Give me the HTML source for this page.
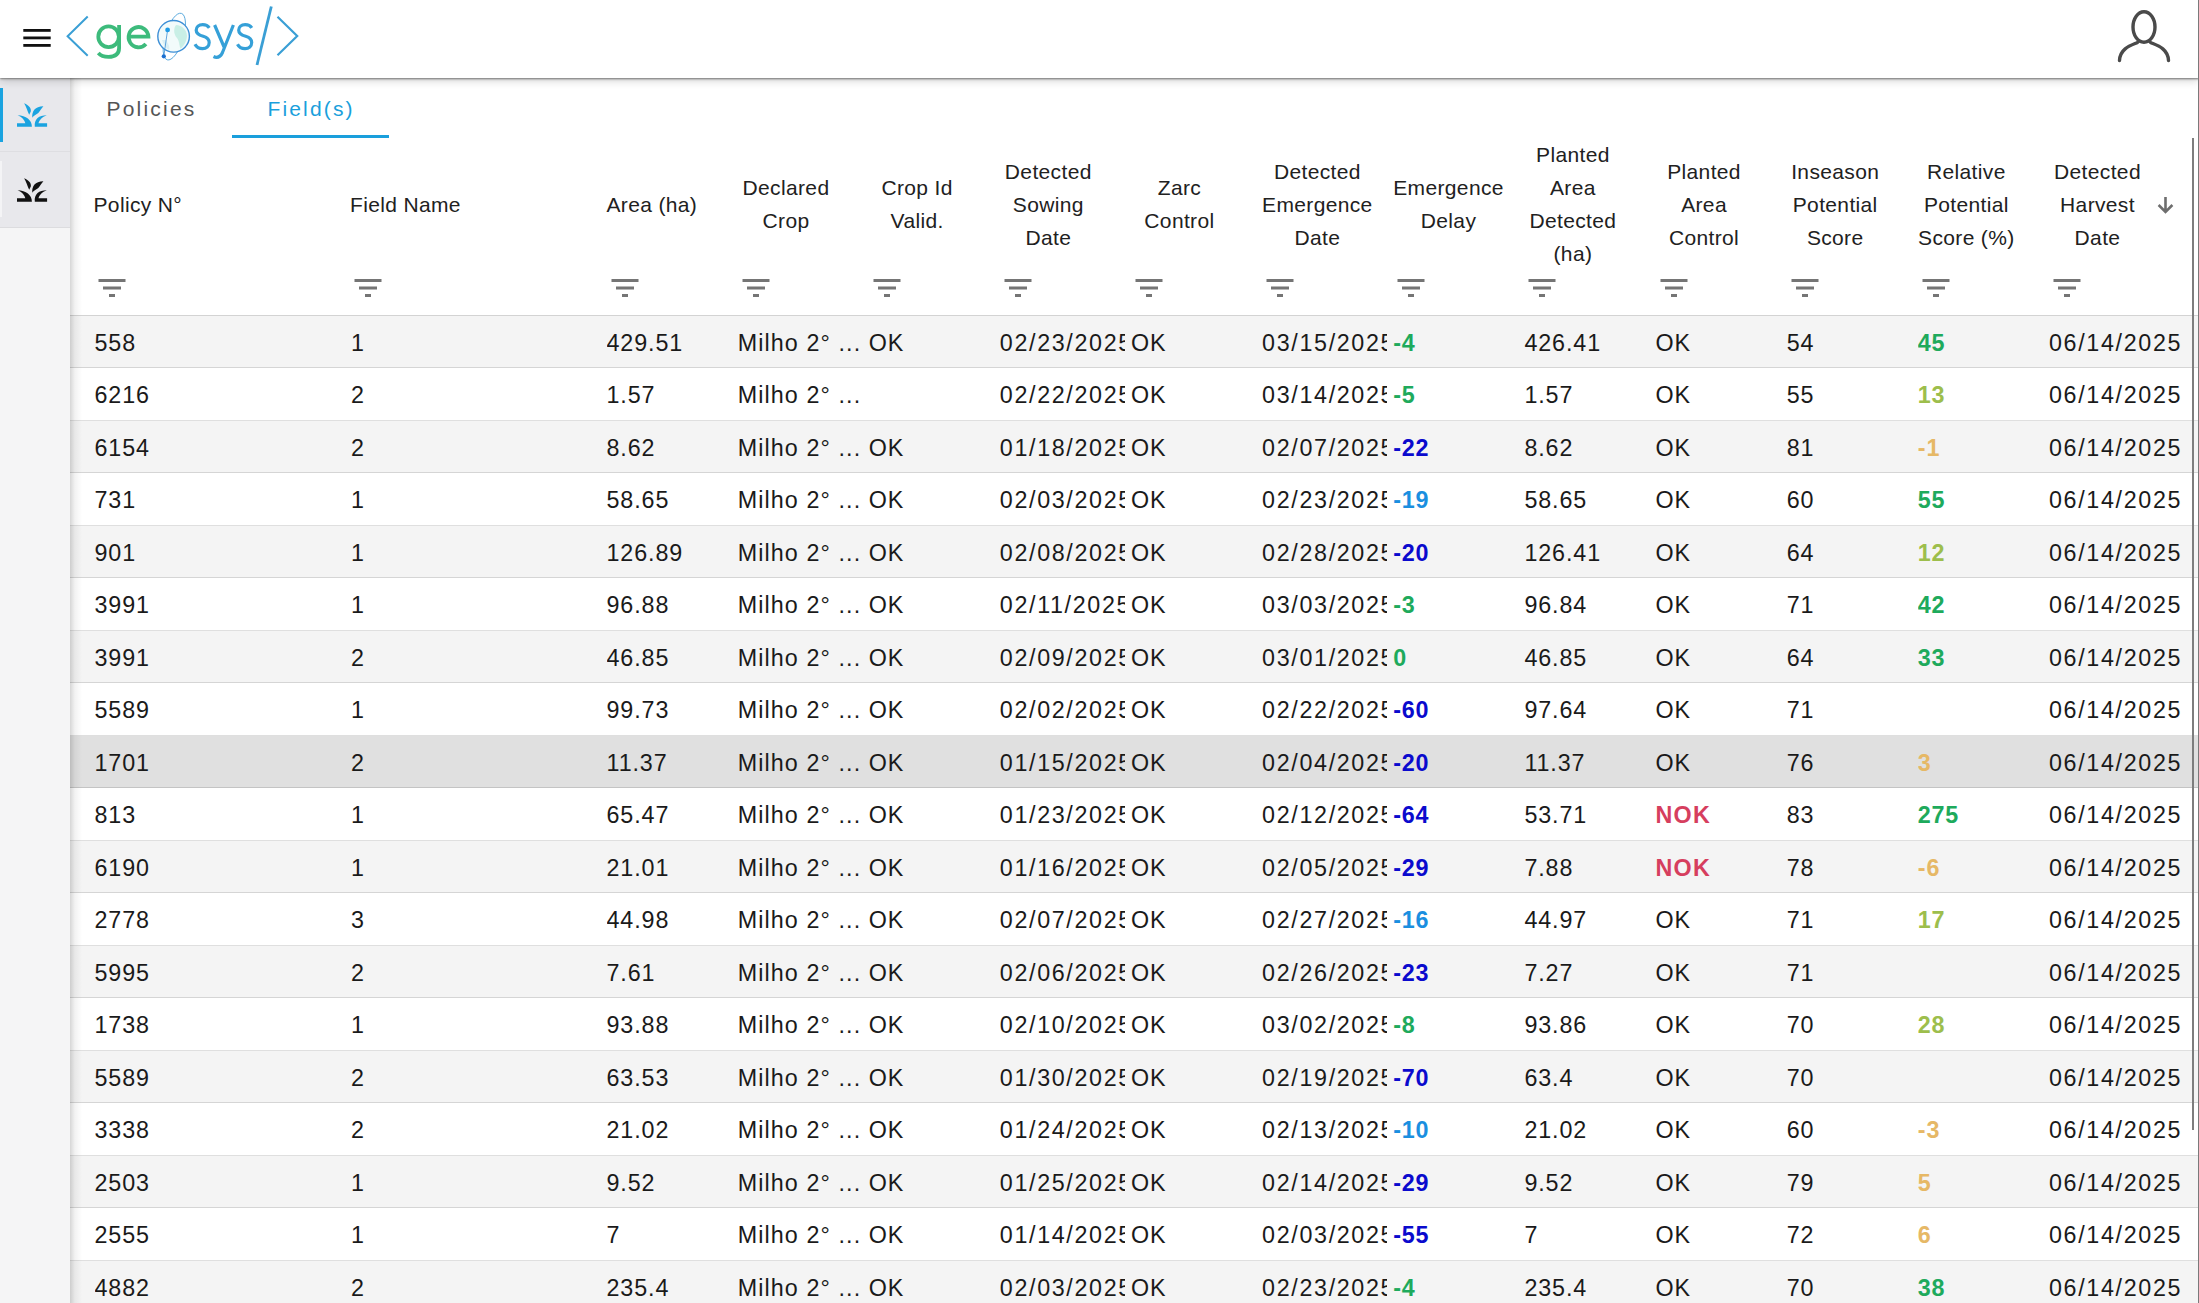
<!DOCTYPE html><html><head><meta charset="utf-8"><style>
*{box-sizing:border-box;margin:0;padding:0}
html,body{width:2199px;height:1303px;overflow:hidden;background:#fff;font-family:"Liberation Sans", sans-serif;}
#top{position:absolute;left:0;top:0;width:2199px;height:78px;background:#fff;z-index:5;box-shadow:0 1px 2px rgba(0,0,0,.5),0 2px 9px rgba(0,0,0,.2)}
#side{position:absolute;left:0;top:78px;width:70px;height:1225px;background:#f5f5f6;z-index:3;}
#main{position:absolute;left:70px;top:78px;width:2129px;height:1225px;background:#fff;overflow:hidden}
#mainshadow{position:absolute;left:70px;top:78px;width:12px;height:1225px;background:linear-gradient(to right,rgba(0,0,0,.16),rgba(0,0,0,.05) 40%,rgba(0,0,0,0));z-index:4}
.hl{position:absolute;font-size:21px;line-height:33px;color:#212121;white-space:nowrap;letter-spacing:0.35px}
.hb{position:absolute;font-size:21px;line-height:33px;color:#212121;white-space:nowrap;text-align:center;min-width:97px;width:max-content;letter-spacing:0.35px}
.rowbg{position:absolute;left:70px;width:2128px;border-bottom:1px solid rgba(0,0,0,.125)}
.row{position:absolute;left:70px;width:2128px;height:52px}
.c{position:absolute;top:0;height:52px;line-height:56px;font-size:23.3px;color:#1a1a1a;white-space:nowrap;overflow:hidden;letter-spacing:0.9px}
.b{font-weight:bold;letter-spacing:0.8px}
.d{letter-spacing:1.65px}
.nok{letter-spacing:1.2px}
.m{letter-spacing:1.1px}
.flt{position:absolute;top:270px;width:36px;height:36px}
</style></head><body>
<div id="top">
<svg style="position:absolute;left:0;top:0" width="320" height="78" viewBox="0 0 320 78"><rect x="23.3" y="29" width="27.4" height="2.8" fill="#111"/><rect x="23.3" y="36.5" width="27.4" height="2.8" fill="#111"/><rect x="23.3" y="44" width="27.4" height="2.8" fill="#111"/><path d="M87.7 16.5 L67.6 36.2 L87.7 55.8" fill="none" stroke="#3a9fd5" stroke-width="2"/><path d="M277.5 16.8 L297.2 36 L277.5 55.2" fill="none" stroke="#3a9fd5" stroke-width="2.2"/><path d="M271.3 6.5 L257 65" fill="none" stroke="#3a9fd5" stroke-width="2.8"/><g fill="none" stroke="#3dbb7c" stroke-width="3.8"><circle cx="108.6" cy="36.75" r="10.3"/><path d="M119.1 25 V48 C119 54.5 114.5 56.9 108.5 56.9 C104 56.9 100.5 55.5 98.3 53"/><path d="M128.8 36.6 H148.4 A9.9 10.1 0 1 0 145.9 43.9"/></g><ellipse cx="174.3" cy="36.6" rx="9" ry="24.3" transform="rotate(17 174.3 36.6)" fill="none" stroke="#5aa9dd" stroke-width="0.9"/><circle cx="173.6" cy="36.3" r="15.8" fill="#f2fbfb" stroke="#3d8fd6" stroke-width="1.4"/><path d="M176 25 C182 25.5 187 30 187 36 C186.5 42 183.5 46.5 180.5 48.5 C179 45 179.5 41 177 38 C174 35 173 29 176 25 Z" fill="#a8e6d6" opacity="0.55"/><path d="M166 40 C168 43 170 47 169 50 C166 48 163 44 162 40 Z" fill="#bfe3f0" opacity="0.5"/><path d="M167.6 29.9 L163.8 56.3" stroke="#3d8fd6" stroke-width="0.8"/><circle cx="167.6" cy="29.9" r="2.4" fill="#1f9be6"/><circle cx="163.8" cy="56.3" r="2.1" fill="#1a6fd0"/><g fill="none" stroke="#35a0d8" stroke-width="3.2"><path d="M209.3 27.8 C208 25.8 205.5 24.6 202.7 24.6 C198.8 24.6 196.2 26.9 196.2 30.2 C196.2 33.8 199.5 35.2 203.2 36.3 C207 37.4 209.2 39.3 209.2 42.6 C209.2 46.2 206.3 48.6 202.6 48.6 C199 48.6 196.3 46.8 195 44.2"/><path d="M251.8 27.8 C250.5 25.8 248 24.6 245.2 24.6 C241.3 24.6 238.7 26.9 238.7 30.2 C238.7 33.8 242 35.2 245.7 36.3 C249.5 37.4 251.7 39.3 251.7 42.6 C251.7 46.2 248.8 48.6 245.1 48.6 C241.5 48.6 238.8 46.8 237.5 44.2"/><path d="M214.6 25 L224.3 47.5 M233.4 25 L222.5 52.5 C221 56 219 57.3 216.5 57.3 C215.5 57.3 214.5 57 213.5 56.5"/></g></svg>
<svg style="position:absolute;left:2110px;top:6px" width="70" height="62" viewBox="2110 6 70 62"><ellipse cx="2144" cy="27" rx="11" ry="15.3" fill="none" stroke="#4a4a4a" stroke-width="3.4"/><path d="M2137.5 42.5 C2132 45 2120 48 2119.5 60.5 M2150.5 42.5 C2156 45 2168 48 2168.5 60.5" fill="none" stroke="#4a4a4a" stroke-width="3.4" stroke-linecap="round"/></svg>
</div>
<div id="side"><div style="position:absolute;left:0;top:2px;width:70px;height:72px;background:#e8e8ec;border-bottom:1px solid #dedee2"></div><div style="position:absolute;left:0;top:9.6px;width:2.5px;height:54px;background:#1aa3e0"></div><div style="position:absolute;left:0;top:74px;width:70px;height:76px;background:#e8e8ec;border-bottom:1px solid #dcdcdf"></div><div style="position:absolute;left:0;top:83px;width:2px;height:56px;background:#f4f4f6"></div><svg style="position:absolute;left:17px;top:25px" width="31" height="25" viewBox="0 0 31 25"><path fill="#1aa3e0" d="M0 20.3 H8.3 C7.8 17.5 5 14 0.6 12.3 C9 12.5 14.9 17 14.9 23.8 H0 Z M30.1 20.3 H21.5 C22.2 17.5 25 14 29.8 12.3 C22 12.3 17 16 17.8 23.8 H30.1 Z M7.1 0.2 C12 2 14.5 5.5 13.8 8.5 L12.2 11.7 C10.5 8.5 9 3 7.1 0.2 Z M15.3 14.7 C14.8 8 18 3.5 26.4 3.2 C25 4.5 22.5 9 20.6 10.6 C18.5 12 16.3 13 15.3 14.7 Z"/></svg><svg style="position:absolute;left:17px;top:100px" width="31" height="25" viewBox="0 0 31 25"><path fill="#111" d="M0 20.3 H8.3 C7.8 17.5 5 14 0.6 12.3 C9 12.5 14.9 17 14.9 23.8 H0 Z M30.1 20.3 H21.5 C22.2 17.5 25 14 29.8 12.3 C22 12.3 17 16 17.8 23.8 H30.1 Z M7.1 0.2 C12 2 14.5 5.5 13.8 8.5 L12.2 11.7 C10.5 8.5 9 3 7.1 0.2 Z M15.3 14.7 C14.8 8 18 3.5 26.4 3.2 C25 4.5 22.5 9 20.6 10.6 C18.5 12 16.3 13 15.3 14.7 Z"/></svg></div>
<div id="mainshadow"></div>
<div id="main"></div>
<div style="position:absolute;left:106.5px;top:93.5px;font-size:21px;line-height:30px;letter-spacing:2.2px;color:#555">Policies</div>
<div style="position:absolute;left:267.5px;top:93.5px;font-size:21px;line-height:30px;letter-spacing:2.15px;color:#1a9fdc">Field(s)</div>
<div style="position:absolute;left:232px;top:135px;width:157px;height:3px;background:#1a9fdc"></div>
<div class="hl" style="left:93.5px;top:187.5px">Policy N°</div>
<div class="flt" style="left:93.5px"><svg width="36" height="36" viewBox="0 0 24 24"><path fill="#757575" d="M10 18h4v-2h-4v2zM3 6v2h18V6H3zm3 7h12v-2H6v2z"/></svg></div>
<div class="hl" style="left:350.0px;top:187.5px">Field Name</div>
<div class="flt" style="left:350.0px"><svg width="36" height="36" viewBox="0 0 24 24"><path fill="#757575" d="M10 18h4v-2h-4v2zM3 6v2h18V6H3zm3 7h12v-2H6v2z"/></svg></div>
<div class="hl" style="left:606.5px;top:187.5px">Area (ha)</div>
<div class="flt" style="left:606.5px"><svg width="36" height="36" viewBox="0 0 24 24"><path fill="#757575" d="M10 18h4v-2h-4v2zM3 6v2h18V6H3zm3 7h12v-2H6v2z"/></svg></div>
<div class="hb" style="left:737.5px;top:171.0px">Declared<br>Crop</div>
<div class="flt" style="left:737.5px"><svg width="36" height="36" viewBox="0 0 24 24"><path fill="#757575" d="M10 18h4v-2h-4v2zM3 6v2h18V6H3zm3 7h12v-2H6v2z"/></svg></div>
<div class="hb" style="left:868.65px;top:171.0px">Crop Id<br>Valid.</div>
<div class="flt" style="left:868.65px"><svg width="36" height="36" viewBox="0 0 24 24"><path fill="#757575" d="M10 18h4v-2h-4v2zM3 6v2h18V6H3zm3 7h12v-2H6v2z"/></svg></div>
<div class="hb" style="left:999.8px;top:154.5px">Detected<br>Sowing<br>Date</div>
<div class="flt" style="left:999.8px"><svg width="36" height="36" viewBox="0 0 24 24"><path fill="#757575" d="M10 18h4v-2h-4v2zM3 6v2h18V6H3zm3 7h12v-2H6v2z"/></svg></div>
<div class="hb" style="left:1130.95px;top:171.0px">Zarc<br>Control</div>
<div class="flt" style="left:1130.95px"><svg width="36" height="36" viewBox="0 0 24 24"><path fill="#757575" d="M10 18h4v-2h-4v2zM3 6v2h18V6H3zm3 7h12v-2H6v2z"/></svg></div>
<div class="hb" style="left:1262.1px;top:154.5px">Detected<br>Emergence<br>Date</div>
<div class="flt" style="left:1262.1px"><svg width="36" height="36" viewBox="0 0 24 24"><path fill="#757575" d="M10 18h4v-2h-4v2zM3 6v2h18V6H3zm3 7h12v-2H6v2z"/></svg></div>
<div class="hb" style="left:1393.25px;top:171.0px">Emergence<br>Delay</div>
<div class="flt" style="left:1393.25px"><svg width="36" height="36" viewBox="0 0 24 24"><path fill="#757575" d="M10 18h4v-2h-4v2zM3 6v2h18V6H3zm3 7h12v-2H6v2z"/></svg></div>
<div class="hb" style="left:1524.4px;top:138.0px">Planted<br>Area<br>Detected<br>(ha)</div>
<div class="flt" style="left:1524.4px"><svg width="36" height="36" viewBox="0 0 24 24"><path fill="#757575" d="M10 18h4v-2h-4v2zM3 6v2h18V6H3zm3 7h12v-2H6v2z"/></svg></div>
<div class="hb" style="left:1655.5500000000002px;top:154.5px">Planted<br>Area<br>Control</div>
<div class="flt" style="left:1655.5500000000002px"><svg width="36" height="36" viewBox="0 0 24 24"><path fill="#757575" d="M10 18h4v-2h-4v2zM3 6v2h18V6H3zm3 7h12v-2H6v2z"/></svg></div>
<div class="hb" style="left:1786.7px;top:154.5px">Inseason<br>Potential<br>Score</div>
<div class="flt" style="left:1786.7px"><svg width="36" height="36" viewBox="0 0 24 24"><path fill="#757575" d="M10 18h4v-2h-4v2zM3 6v2h18V6H3zm3 7h12v-2H6v2z"/></svg></div>
<div class="hb" style="left:1917.8500000000001px;top:154.5px">Relative<br>Potential<br>Score (%)</div>
<div class="flt" style="left:1917.8500000000001px"><svg width="36" height="36" viewBox="0 0 24 24"><path fill="#757575" d="M10 18h4v-2h-4v2zM3 6v2h18V6H3zm3 7h12v-2H6v2z"/></svg></div>
<div class="hb" style="left:2049.0px;top:154.5px">Detected<br>Harvest<br>Date</div>
<div class="flt" style="left:2049.0px"><svg width="36" height="36" viewBox="0 0 24 24"><path fill="#757575" d="M10 18h4v-2h-4v2zM3 6v2h18V6H3zm3 7h12v-2H6v2z"/></svg></div>
<svg style="position:absolute;left:2150px;top:190px" width="30" height="30" viewBox="2150 190 30 30"><path d="M2165.5 197 V211.5 M2158.6 205 L2165.5 211.9 L2172.4 205" fill="none" stroke="#6e6e6e" stroke-width="2.6"/></svg>
<div class="rowbg" style="top:316px;height:52px;background:#f4f4f4"></div>
<div class="row" style="top:315px">
<div class="c" style="left:24.5px;width:250px">558</div>
<div class="c" style="left:281.0px;width:250px">1</div>
<div class="c" style="left:536.5px;width:125px">429.51</div>
<div class="c m" style="left:667.75px;width:124.75px">Milho 2° ...</div>
<div class="c" style="left:798.65px;width:125px">OK</div>
<div class="c d" style="left:929.8px;width:125px">02/23/2025</div>
<div class="c" style="left:1060.95px;width:125px">OK</div>
<div class="c d" style="left:1192.1px;width:125px">03/15/2025</div>
<div class="c b" style="left:1323.25px;width:125px;color:#1eaa5c">-4</div>
<div class="c" style="left:1454.4px;width:125px">426.41</div>
<div class="c" style="left:1585.5500000000002px;width:125px">OK</div>
<div class="c" style="left:1716.7px;width:125px">54</div>
<div class="c b" style="left:1847.8500000000001px;width:125px;color:#1eaa5c">45</div>
<div class="c d" style="left:1979.0px;width:145px">06/14/2025</div>
</div>
<div class="rowbg" style="top:368px;height:53px;background:#ffffff"></div>
<div class="row" style="top:367px">
<div class="c" style="left:24.5px;width:250px">6216</div>
<div class="c" style="left:281.0px;width:250px">2</div>
<div class="c" style="left:536.5px;width:125px">1.57</div>
<div class="c m" style="left:667.75px;width:124.75px">Milho 2° ...</div>
<div class="c d" style="left:929.8px;width:125px">02/22/2025</div>
<div class="c" style="left:1060.95px;width:125px">OK</div>
<div class="c d" style="left:1192.1px;width:125px">03/14/2025</div>
<div class="c b" style="left:1323.25px;width:125px;color:#1eaa5c">-5</div>
<div class="c" style="left:1454.4px;width:125px">1.57</div>
<div class="c" style="left:1585.5500000000002px;width:125px">OK</div>
<div class="c" style="left:1716.7px;width:125px">55</div>
<div class="c b" style="left:1847.8500000000001px;width:125px;color:#9dbe4c">13</div>
<div class="c d" style="left:1979.0px;width:145px">06/14/2025</div>
</div>
<div class="rowbg" style="top:421px;height:52px;background:#f4f4f4"></div>
<div class="row" style="top:420px">
<div class="c" style="left:24.5px;width:250px">6154</div>
<div class="c" style="left:281.0px;width:250px">2</div>
<div class="c" style="left:536.5px;width:125px">8.62</div>
<div class="c m" style="left:667.75px;width:124.75px">Milho 2° ...</div>
<div class="c" style="left:798.65px;width:125px">OK</div>
<div class="c d" style="left:929.8px;width:125px">01/18/2025</div>
<div class="c" style="left:1060.95px;width:125px">OK</div>
<div class="c d" style="left:1192.1px;width:125px">02/07/2025</div>
<div class="c b" style="left:1323.25px;width:125px;color:#0a0acd">-22</div>
<div class="c" style="left:1454.4px;width:125px">8.62</div>
<div class="c" style="left:1585.5500000000002px;width:125px">OK</div>
<div class="c" style="left:1716.7px;width:125px">81</div>
<div class="c b" style="left:1847.8500000000001px;width:125px;color:#e6b866">-1</div>
<div class="c d" style="left:1979.0px;width:145px">06/14/2025</div>
</div>
<div class="rowbg" style="top:473px;height:53px;background:#ffffff"></div>
<div class="row" style="top:472px">
<div class="c" style="left:24.5px;width:250px">731</div>
<div class="c" style="left:281.0px;width:250px">1</div>
<div class="c" style="left:536.5px;width:125px">58.65</div>
<div class="c m" style="left:667.75px;width:124.75px">Milho 2° ...</div>
<div class="c" style="left:798.65px;width:125px">OK</div>
<div class="c d" style="left:929.8px;width:125px">02/03/2025</div>
<div class="c" style="left:1060.95px;width:125px">OK</div>
<div class="c d" style="left:1192.1px;width:125px">02/23/2025</div>
<div class="c b" style="left:1323.25px;width:125px;color:#1a8fe0">-19</div>
<div class="c" style="left:1454.4px;width:125px">58.65</div>
<div class="c" style="left:1585.5500000000002px;width:125px">OK</div>
<div class="c" style="left:1716.7px;width:125px">60</div>
<div class="c b" style="left:1847.8500000000001px;width:125px;color:#1eaa5c">55</div>
<div class="c d" style="left:1979.0px;width:145px">06/14/2025</div>
</div>
<div class="rowbg" style="top:526px;height:52px;background:#f4f4f4"></div>
<div class="row" style="top:525px">
<div class="c" style="left:24.5px;width:250px">901</div>
<div class="c" style="left:281.0px;width:250px">1</div>
<div class="c" style="left:536.5px;width:125px">126.89</div>
<div class="c m" style="left:667.75px;width:124.75px">Milho 2° ...</div>
<div class="c" style="left:798.65px;width:125px">OK</div>
<div class="c d" style="left:929.8px;width:125px">02/08/2025</div>
<div class="c" style="left:1060.95px;width:125px">OK</div>
<div class="c d" style="left:1192.1px;width:125px">02/28/2025</div>
<div class="c b" style="left:1323.25px;width:125px;color:#0a0acd">-20</div>
<div class="c" style="left:1454.4px;width:125px">126.41</div>
<div class="c" style="left:1585.5500000000002px;width:125px">OK</div>
<div class="c" style="left:1716.7px;width:125px">64</div>
<div class="c b" style="left:1847.8500000000001px;width:125px;color:#9dbe4c">12</div>
<div class="c d" style="left:1979.0px;width:145px">06/14/2025</div>
</div>
<div class="rowbg" style="top:578px;height:53px;background:#ffffff"></div>
<div class="row" style="top:577px">
<div class="c" style="left:24.5px;width:250px">3991</div>
<div class="c" style="left:281.0px;width:250px">1</div>
<div class="c" style="left:536.5px;width:125px">96.88</div>
<div class="c m" style="left:667.75px;width:124.75px">Milho 2° ...</div>
<div class="c" style="left:798.65px;width:125px">OK</div>
<div class="c d" style="left:929.8px;width:125px">02/11/2025</div>
<div class="c" style="left:1060.95px;width:125px">OK</div>
<div class="c d" style="left:1192.1px;width:125px">03/03/2025</div>
<div class="c b" style="left:1323.25px;width:125px;color:#1eaa5c">-3</div>
<div class="c" style="left:1454.4px;width:125px">96.84</div>
<div class="c" style="left:1585.5500000000002px;width:125px">OK</div>
<div class="c" style="left:1716.7px;width:125px">71</div>
<div class="c b" style="left:1847.8500000000001px;width:125px;color:#1eaa5c">42</div>
<div class="c d" style="left:1979.0px;width:145px">06/14/2025</div>
</div>
<div class="rowbg" style="top:631px;height:52px;background:#f4f4f4"></div>
<div class="row" style="top:630px">
<div class="c" style="left:24.5px;width:250px">3991</div>
<div class="c" style="left:281.0px;width:250px">2</div>
<div class="c" style="left:536.5px;width:125px">46.85</div>
<div class="c m" style="left:667.75px;width:124.75px">Milho 2° ...</div>
<div class="c" style="left:798.65px;width:125px">OK</div>
<div class="c d" style="left:929.8px;width:125px">02/09/2025</div>
<div class="c" style="left:1060.95px;width:125px">OK</div>
<div class="c d" style="left:1192.1px;width:125px">03/01/2025</div>
<div class="c b" style="left:1323.25px;width:125px;color:#1eaa5c">0</div>
<div class="c" style="left:1454.4px;width:125px">46.85</div>
<div class="c" style="left:1585.5500000000002px;width:125px">OK</div>
<div class="c" style="left:1716.7px;width:125px">64</div>
<div class="c b" style="left:1847.8500000000001px;width:125px;color:#1eaa5c">33</div>
<div class="c d" style="left:1979.0px;width:145px">06/14/2025</div>
</div>
<div class="rowbg" style="top:683px;height:53px;background:#ffffff"></div>
<div class="row" style="top:682px">
<div class="c" style="left:24.5px;width:250px">5589</div>
<div class="c" style="left:281.0px;width:250px">1</div>
<div class="c" style="left:536.5px;width:125px">99.73</div>
<div class="c m" style="left:667.75px;width:124.75px">Milho 2° ...</div>
<div class="c" style="left:798.65px;width:125px">OK</div>
<div class="c d" style="left:929.8px;width:125px">02/02/2025</div>
<div class="c" style="left:1060.95px;width:125px">OK</div>
<div class="c d" style="left:1192.1px;width:125px">02/22/2025</div>
<div class="c b" style="left:1323.25px;width:125px;color:#0a0acd">-60</div>
<div class="c" style="left:1454.4px;width:125px">97.64</div>
<div class="c" style="left:1585.5500000000002px;width:125px">OK</div>
<div class="c" style="left:1716.7px;width:125px">71</div>
<div class="c d" style="left:1979.0px;width:145px">06/14/2025</div>
</div>
<div class="rowbg" style="top:736px;height:52px;background:#e0e0e0"></div>
<div class="row" style="top:735px">
<div class="c" style="left:24.5px;width:250px">1701</div>
<div class="c" style="left:281.0px;width:250px">2</div>
<div class="c" style="left:536.5px;width:125px">11.37</div>
<div class="c m" style="left:667.75px;width:124.75px">Milho 2° ...</div>
<div class="c" style="left:798.65px;width:125px">OK</div>
<div class="c d" style="left:929.8px;width:125px">01/15/2025</div>
<div class="c" style="left:1060.95px;width:125px">OK</div>
<div class="c d" style="left:1192.1px;width:125px">02/04/2025</div>
<div class="c b" style="left:1323.25px;width:125px;color:#0a0acd">-20</div>
<div class="c" style="left:1454.4px;width:125px">11.37</div>
<div class="c" style="left:1585.5500000000002px;width:125px">OK</div>
<div class="c" style="left:1716.7px;width:125px">76</div>
<div class="c b" style="left:1847.8500000000001px;width:125px;color:#e6b866">3</div>
<div class="c d" style="left:1979.0px;width:145px">06/14/2025</div>
</div>
<div class="rowbg" style="top:788px;height:53px;background:#ffffff"></div>
<div class="row" style="top:787px">
<div class="c" style="left:24.5px;width:250px">813</div>
<div class="c" style="left:281.0px;width:250px">1</div>
<div class="c" style="left:536.5px;width:125px">65.47</div>
<div class="c m" style="left:667.75px;width:124.75px">Milho 2° ...</div>
<div class="c" style="left:798.65px;width:125px">OK</div>
<div class="c d" style="left:929.8px;width:125px">01/23/2025</div>
<div class="c" style="left:1060.95px;width:125px">OK</div>
<div class="c d" style="left:1192.1px;width:125px">02/12/2025</div>
<div class="c b" style="left:1323.25px;width:125px;color:#0a0acd">-64</div>
<div class="c" style="left:1454.4px;width:125px">53.71</div>
<div class="c b nok" style="left:1585.5500000000002px;width:125px;color:#d63e5e">NOK</div>
<div class="c" style="left:1716.7px;width:125px">83</div>
<div class="c b" style="left:1847.8500000000001px;width:125px;color:#1eaa5c">275</div>
<div class="c d" style="left:1979.0px;width:145px">06/14/2025</div>
</div>
<div class="rowbg" style="top:841px;height:52px;background:#f4f4f4"></div>
<div class="row" style="top:840px">
<div class="c" style="left:24.5px;width:250px">6190</div>
<div class="c" style="left:281.0px;width:250px">1</div>
<div class="c" style="left:536.5px;width:125px">21.01</div>
<div class="c m" style="left:667.75px;width:124.75px">Milho 2° ...</div>
<div class="c" style="left:798.65px;width:125px">OK</div>
<div class="c d" style="left:929.8px;width:125px">01/16/2025</div>
<div class="c" style="left:1060.95px;width:125px">OK</div>
<div class="c d" style="left:1192.1px;width:125px">02/05/2025</div>
<div class="c b" style="left:1323.25px;width:125px;color:#0a0acd">-29</div>
<div class="c" style="left:1454.4px;width:125px">7.88</div>
<div class="c b nok" style="left:1585.5500000000002px;width:125px;color:#d63e5e">NOK</div>
<div class="c" style="left:1716.7px;width:125px">78</div>
<div class="c b" style="left:1847.8500000000001px;width:125px;color:#e6b866">-6</div>
<div class="c d" style="left:1979.0px;width:145px">06/14/2025</div>
</div>
<div class="rowbg" style="top:893px;height:53px;background:#ffffff"></div>
<div class="row" style="top:892px">
<div class="c" style="left:24.5px;width:250px">2778</div>
<div class="c" style="left:281.0px;width:250px">3</div>
<div class="c" style="left:536.5px;width:125px">44.98</div>
<div class="c m" style="left:667.75px;width:124.75px">Milho 2° ...</div>
<div class="c" style="left:798.65px;width:125px">OK</div>
<div class="c d" style="left:929.8px;width:125px">02/07/2025</div>
<div class="c" style="left:1060.95px;width:125px">OK</div>
<div class="c d" style="left:1192.1px;width:125px">02/27/2025</div>
<div class="c b" style="left:1323.25px;width:125px;color:#1a8fe0">-16</div>
<div class="c" style="left:1454.4px;width:125px">44.97</div>
<div class="c" style="left:1585.5500000000002px;width:125px">OK</div>
<div class="c" style="left:1716.7px;width:125px">71</div>
<div class="c b" style="left:1847.8500000000001px;width:125px;color:#9dbe4c">17</div>
<div class="c d" style="left:1979.0px;width:145px">06/14/2025</div>
</div>
<div class="rowbg" style="top:946px;height:52px;background:#f4f4f4"></div>
<div class="row" style="top:945px">
<div class="c" style="left:24.5px;width:250px">5995</div>
<div class="c" style="left:281.0px;width:250px">2</div>
<div class="c" style="left:536.5px;width:125px">7.61</div>
<div class="c m" style="left:667.75px;width:124.75px">Milho 2° ...</div>
<div class="c" style="left:798.65px;width:125px">OK</div>
<div class="c d" style="left:929.8px;width:125px">02/06/2025</div>
<div class="c" style="left:1060.95px;width:125px">OK</div>
<div class="c d" style="left:1192.1px;width:125px">02/26/2025</div>
<div class="c b" style="left:1323.25px;width:125px;color:#0a0acd">-23</div>
<div class="c" style="left:1454.4px;width:125px">7.27</div>
<div class="c" style="left:1585.5500000000002px;width:125px">OK</div>
<div class="c" style="left:1716.7px;width:125px">71</div>
<div class="c d" style="left:1979.0px;width:145px">06/14/2025</div>
</div>
<div class="rowbg" style="top:998px;height:53px;background:#ffffff"></div>
<div class="row" style="top:997px">
<div class="c" style="left:24.5px;width:250px">1738</div>
<div class="c" style="left:281.0px;width:250px">1</div>
<div class="c" style="left:536.5px;width:125px">93.88</div>
<div class="c m" style="left:667.75px;width:124.75px">Milho 2° ...</div>
<div class="c" style="left:798.65px;width:125px">OK</div>
<div class="c d" style="left:929.8px;width:125px">02/10/2025</div>
<div class="c" style="left:1060.95px;width:125px">OK</div>
<div class="c d" style="left:1192.1px;width:125px">03/02/2025</div>
<div class="c b" style="left:1323.25px;width:125px;color:#1eaa5c">-8</div>
<div class="c" style="left:1454.4px;width:125px">93.86</div>
<div class="c" style="left:1585.5500000000002px;width:125px">OK</div>
<div class="c" style="left:1716.7px;width:125px">70</div>
<div class="c b" style="left:1847.8500000000001px;width:125px;color:#9dbe4c">28</div>
<div class="c d" style="left:1979.0px;width:145px">06/14/2025</div>
</div>
<div class="rowbg" style="top:1051px;height:52px;background:#f4f4f4"></div>
<div class="row" style="top:1050px">
<div class="c" style="left:24.5px;width:250px">5589</div>
<div class="c" style="left:281.0px;width:250px">2</div>
<div class="c" style="left:536.5px;width:125px">63.53</div>
<div class="c m" style="left:667.75px;width:124.75px">Milho 2° ...</div>
<div class="c" style="left:798.65px;width:125px">OK</div>
<div class="c d" style="left:929.8px;width:125px">01/30/2025</div>
<div class="c" style="left:1060.95px;width:125px">OK</div>
<div class="c d" style="left:1192.1px;width:125px">02/19/2025</div>
<div class="c b" style="left:1323.25px;width:125px;color:#0a0acd">-70</div>
<div class="c" style="left:1454.4px;width:125px">63.4</div>
<div class="c" style="left:1585.5500000000002px;width:125px">OK</div>
<div class="c" style="left:1716.7px;width:125px">70</div>
<div class="c d" style="left:1979.0px;width:145px">06/14/2025</div>
</div>
<div class="rowbg" style="top:1103px;height:53px;background:#ffffff"></div>
<div class="row" style="top:1102px">
<div class="c" style="left:24.5px;width:250px">3338</div>
<div class="c" style="left:281.0px;width:250px">2</div>
<div class="c" style="left:536.5px;width:125px">21.02</div>
<div class="c m" style="left:667.75px;width:124.75px">Milho 2° ...</div>
<div class="c" style="left:798.65px;width:125px">OK</div>
<div class="c d" style="left:929.8px;width:125px">01/24/2025</div>
<div class="c" style="left:1060.95px;width:125px">OK</div>
<div class="c d" style="left:1192.1px;width:125px">02/13/2025</div>
<div class="c b" style="left:1323.25px;width:125px;color:#1a8fe0">-10</div>
<div class="c" style="left:1454.4px;width:125px">21.02</div>
<div class="c" style="left:1585.5500000000002px;width:125px">OK</div>
<div class="c" style="left:1716.7px;width:125px">60</div>
<div class="c b" style="left:1847.8500000000001px;width:125px;color:#e6b866">-3</div>
<div class="c d" style="left:1979.0px;width:145px">06/14/2025</div>
</div>
<div class="rowbg" style="top:1156px;height:52px;background:#f4f4f4"></div>
<div class="row" style="top:1155px">
<div class="c" style="left:24.5px;width:250px">2503</div>
<div class="c" style="left:281.0px;width:250px">1</div>
<div class="c" style="left:536.5px;width:125px">9.52</div>
<div class="c m" style="left:667.75px;width:124.75px">Milho 2° ...</div>
<div class="c" style="left:798.65px;width:125px">OK</div>
<div class="c d" style="left:929.8px;width:125px">01/25/2025</div>
<div class="c" style="left:1060.95px;width:125px">OK</div>
<div class="c d" style="left:1192.1px;width:125px">02/14/2025</div>
<div class="c b" style="left:1323.25px;width:125px;color:#0a0acd">-29</div>
<div class="c" style="left:1454.4px;width:125px">9.52</div>
<div class="c" style="left:1585.5500000000002px;width:125px">OK</div>
<div class="c" style="left:1716.7px;width:125px">79</div>
<div class="c b" style="left:1847.8500000000001px;width:125px;color:#e6b866">5</div>
<div class="c d" style="left:1979.0px;width:145px">06/14/2025</div>
</div>
<div class="rowbg" style="top:1208px;height:53px;background:#ffffff"></div>
<div class="row" style="top:1207px">
<div class="c" style="left:24.5px;width:250px">2555</div>
<div class="c" style="left:281.0px;width:250px">1</div>
<div class="c" style="left:536.5px;width:125px">7</div>
<div class="c m" style="left:667.75px;width:124.75px">Milho 2° ...</div>
<div class="c" style="left:798.65px;width:125px">OK</div>
<div class="c d" style="left:929.8px;width:125px">01/14/2025</div>
<div class="c" style="left:1060.95px;width:125px">OK</div>
<div class="c d" style="left:1192.1px;width:125px">02/03/2025</div>
<div class="c b" style="left:1323.25px;width:125px;color:#0a0acd">-55</div>
<div class="c" style="left:1454.4px;width:125px">7</div>
<div class="c" style="left:1585.5500000000002px;width:125px">OK</div>
<div class="c" style="left:1716.7px;width:125px">72</div>
<div class="c b" style="left:1847.8500000000001px;width:125px;color:#e6b866">6</div>
<div class="c d" style="left:1979.0px;width:145px">06/14/2025</div>
</div>
<div class="rowbg" style="top:1261px;height:52px;background:#f4f4f4"></div>
<div class="row" style="top:1260px">
<div class="c" style="left:24.5px;width:250px">4882</div>
<div class="c" style="left:281.0px;width:250px">2</div>
<div class="c" style="left:536.5px;width:125px">235.4</div>
<div class="c m" style="left:667.75px;width:124.75px">Milho 2° ...</div>
<div class="c" style="left:798.65px;width:125px">OK</div>
<div class="c d" style="left:929.8px;width:125px">02/03/2025</div>
<div class="c" style="left:1060.95px;width:125px">OK</div>
<div class="c d" style="left:1192.1px;width:125px">02/23/2025</div>
<div class="c b" style="left:1323.25px;width:125px;color:#1eaa5c">-4</div>
<div class="c" style="left:1454.4px;width:125px">235.4</div>
<div class="c" style="left:1585.5500000000002px;width:125px">OK</div>
<div class="c" style="left:1716.7px;width:125px">70</div>
<div class="c b" style="left:1847.8500000000001px;width:125px;color:#1eaa5c">38</div>
<div class="c d" style="left:1979.0px;width:145px">06/14/2025</div>
</div>
<div style="position:absolute;left:70px;top:315px;width:2128px;height:1px;background:#d3d3d3;z-index:2"></div>
<div style="position:absolute;left:2192px;top:138px;width:2px;height:992px;background:#7d7d7d;z-index:6"></div>
<div style="position:absolute;left:2198px;top:0;width:1px;height:1303px;background:#7a7a7a;z-index:6"></div>
</body></html>
